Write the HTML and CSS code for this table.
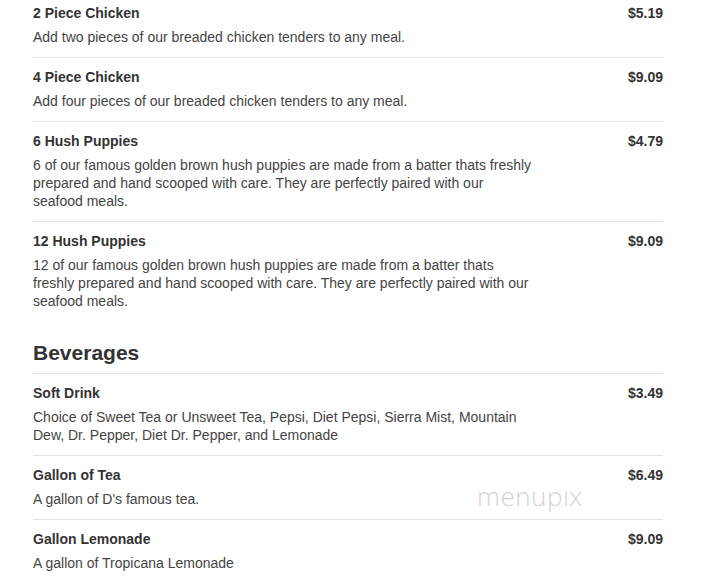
FILE: index.html
```html
<!DOCTYPE html>
<html>
<head>
<meta charset="utf-8">
<link rel="stylesheet" href="styles.css">
</head>
<body>
<div class="menu">
  <section class="section">
    <div class="item">
      <div class="info"><div class="name">2 Piece Chicken</div><div class="desc">Add two pieces of our breaded chicken tenders to any meal.</div></div>
      <div class="price">$5.19</div>
    </div>
    <div class="item">
      <div class="info"><div class="name">4 Piece Chicken</div><div class="desc">Add four pieces of our breaded chicken tenders to any meal.</div></div>
      <div class="price">$9.09</div>
    </div>
    <div class="item">
      <div class="info"><div class="name">6 Hush Puppies</div><div class="desc">6 of our famous golden brown hush puppies are made from a batter thats freshly prepared and hand scooped with care. They are perfectly paired with our seafood meals.</div></div>
      <div class="price">$4.79</div>
    </div>
    <div class="item last">
      <div class="info"><div class="name">12 Hush Puppies</div><div class="desc">12 of our famous golden brown hush puppies are made from a batter thats freshly prepared and hand scooped with care. They are perfectly paired with our seafood meals.</div></div>
      <div class="price">$9.09</div>
    </div>
  </section>
  <section class="section">
    <h2 class="heading">Beverages</h2>
    <div class="item">
      <div class="info"><div class="name">Soft Drink</div><div class="desc">Choice of Sweet Tea or Unsweet Tea, Pepsi, Diet Pepsi, Sierra Mist, Mountain Dew, Dr. Pepper, Diet Dr. Pepper, and Lemonade</div></div>
      <div class="price">$3.49</div>
    </div>
    <div class="item">
      <div class="info"><div class="name">Gallon of Tea</div><div class="desc">A gallon of D's famous tea.</div></div>
      <div class="price">$6.49</div>
    </div>
    <div class="item last">
      <div class="info"><div class="name">Gallon Lemonade</div><div class="desc">A gallon of Tropicana Lemonade</div></div>
      <div class="price">$9.09</div>
    </div>
  </section>
  <div class="watermark">menupıx</div>
</div>
</body>
</html>
```
FILE: styles.css
```css
html, body {
  margin: 0;
  padding: 0;
  background: #fff;
}
body {
  font-family: "Liberation Sans", Arial, sans-serif;
  color: #333;
}
.menu {
  position: relative;
  margin: -6px 46px 0 33px;
  width: 630px;
}
.item {
  display: grid;
  grid-template-columns: 1fr auto;
  padding: 9px 0 11px;
  border-bottom: 1px solid #e3e3e3;
}
.item.last {
  border-bottom: none;
}
.name {
  font-size: 14px;
  font-weight: bold;
  line-height: 20px;
  color: #333;
}
.desc {
  margin-top: 5px;
  font-size: 14px;
  line-height: 18px;
  color: #444;
  max-width: 502px;
}
.price {
  font-size: 14px;
  font-weight: bold;
  line-height: 20px;
  color: #333;
}
.heading {
  margin: 20px 0 0;
  padding-bottom: 8px;
  font-size: 21px;
  line-height: 24px;
  font-weight: bold;
  color: #333;
  border-bottom: 1px solid #e3e3e3;
}
.watermark {
  position: absolute;
  left: 444px;
  top: 484px;
  font-family: "Open Sans", sans-serif;
  font-weight: 300;
  font-size: 26px;
  letter-spacing: 0.5px;
  color: #d4d4d4;
}
```
